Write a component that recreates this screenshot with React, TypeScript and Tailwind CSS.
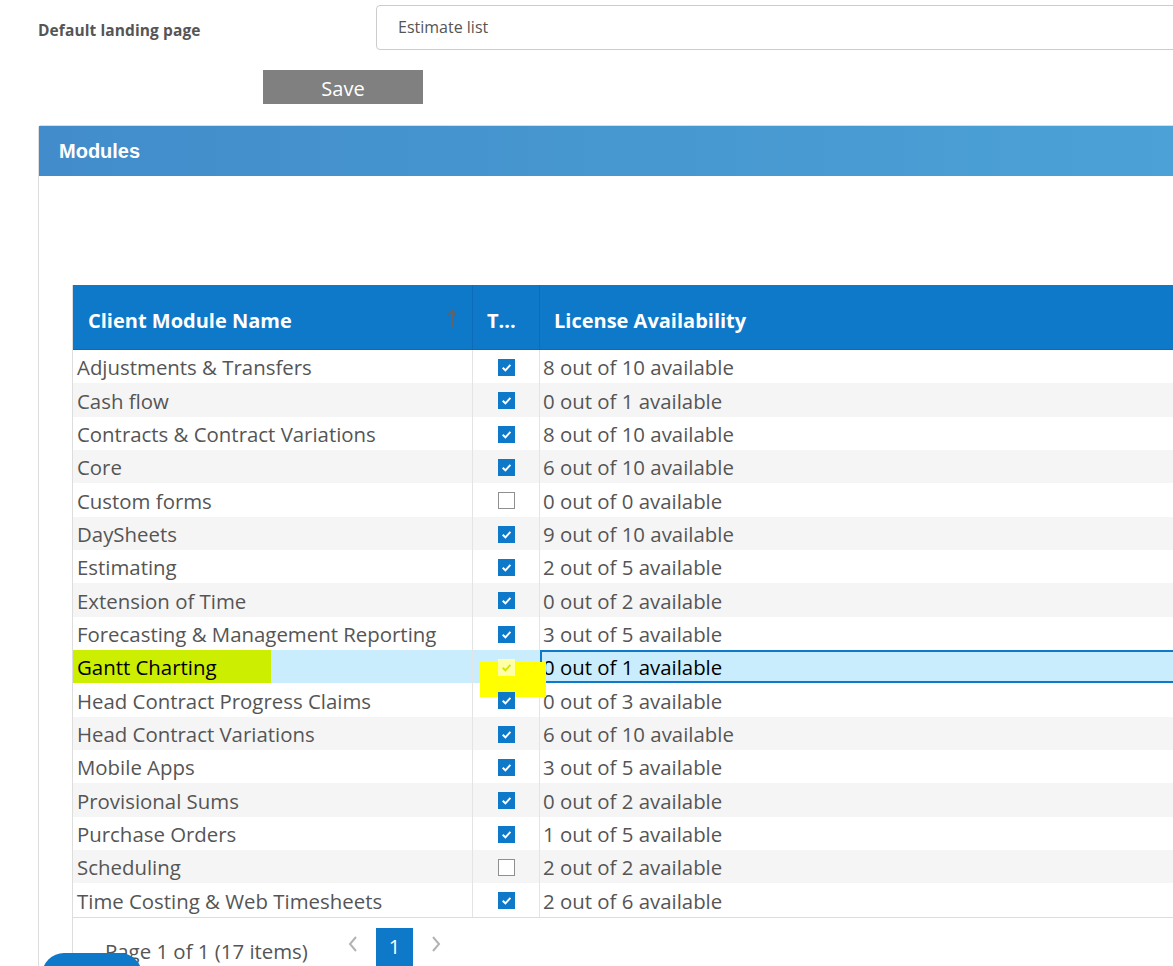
import React from 'react';

const rows: { name: string; on: boolean; lic: string }[] = [
  { name: 'Adjustments & Transfers', on: true, lic: '8 out of 10 available' },
  { name: 'Cash flow', on: true, lic: '0 out of 1 available' },
  { name: 'Contracts & Contract Variations', on: true, lic: '8 out of 10 available' },
  { name: 'Core', on: true, lic: '6 out of 10 available' },
  { name: 'Custom forms', on: false, lic: '0 out of 0 available' },
  { name: 'DaySheets', on: true, lic: '9 out of 10 available' },
  { name: 'Estimating', on: true, lic: '2 out of 5 available' },
  { name: 'Extension of Time', on: true, lic: '0 out of 2 available' },
  { name: 'Forecasting & Management Reporting', on: true, lic: '3 out of 5 available' },
  { name: 'Gantt Charting', on: true, lic: '0 out of 1 available' },
  { name: 'Head Contract Progress Claims', on: true, lic: '0 out of 3 available' },
  { name: 'Head Contract Variations', on: true, lic: '6 out of 10 available' },
  { name: 'Mobile Apps', on: true, lic: '3 out of 5 available' },
  { name: 'Provisional Sums', on: true, lic: '0 out of 2 available' },
  { name: 'Purchase Orders', on: true, lic: '1 out of 5 available' },
  { name: 'Scheduling', on: false, lic: '2 out of 2 available' },
  { name: 'Time Costing & Web Timesheets', on: true, lic: '2 out of 6 available' },
];

const font = { fontFamily: '"Open Sans", "Liberation Sans", sans-serif' };

function Check({ on, faded }: { on: boolean; faded?: boolean }) {
  if (faded) {
    return (
      <div className="w-[17px] h-[17px] bg-[#ffffa8] flex items-center justify-center">
        <svg width="13" height="13" viewBox="0 0 12 12">
          <path d="M2.5 6.2 L5 8.6 L9.6 3.6" fill="none" stroke="#d4e600" strokeWidth="1.8" />
        </svg>
      </div>
    );
  }
  if (!on) {
    return <div className="w-[17px] h-[17px] border border-[#8f8f8f] bg-white" />;
  }
  return (
    <div className="w-[17px] h-[17px] bg-[#0e78c9] flex items-center justify-center">
      <svg width="13" height="13" viewBox="0 0 12 12">
        <path d="M2.5 6.2 L5 8.6 L9.6 3.6" fill="none" stroke="#fff" strokeWidth="1.8" />
      </svg>
    </div>
  );
}

export default function App() {
  return (
    <div className="relative w-[1173px] h-[966px] overflow-hidden bg-white text-[#555]" style={font}>
      {/* landing page row */}
      <div className="flex items-center pt-[5px] w-[1300px]">
        <div className="w-[376px] pl-[38px] pt-[6px] text-[15.5px] font-bold text-[#555] tracking-[0.1px]">Default landing page</div>
        <div className="flex-1 h-[45px] border border-[#ccc] rounded-[4px] flex items-center pl-[21px] pb-[2px] text-[16px] text-[#555]">
          Estimate list
        </div>
      </div>

      <div className="ml-[263px] mt-[20px] w-[160px] h-[34px] bg-[#808080] text-white text-[20px] flex items-center justify-center pt-[3px]">
        Save
      </div>

      {/* modules panel */}
      <div className="ml-[38px] mt-[21px] w-[1200px] h-[900px] border border-[#ddd] rounded-t-[3px]">
        <div
          className="h-[50px] flex items-center pl-[20px] text-white text-[20px] font-bold bg-gradient-to-r from-[#428ccb] to-[#4ca3d6]"
          style={{ fontFamily: '"Liberation Sans", Arial, sans-serif' }}
        >
          Modules
        </div>
        <div className="pt-[109px] pl-[33px]">
          <div className="border-l border-[#ddd] w-[1200px]">
            {/* header */}
            <div className="flex h-[65px] bg-[#0e78c9] text-white text-[20px] font-bold border-b border-[#0b6ab4]">
              <div className="w-[400px] flex items-center pl-[15px] pt-[7px] border-r border-[#0c6cb8] relative">
                Client Module Name
                <svg className="absolute left-[374px] top-[23px]" width="10" height="20" viewBox="0 0 10 20">
                  <path d="M5 19 V3 M1.5 7 L5 2.5 L8.5 7" fill="none" stroke="#5f6468" strokeWidth="2" />
                </svg>
              </div>
              <div className="w-[67px] flex items-center pl-[14px] pt-[7px] border-r border-[#0c6cb8]">T...</div>
              <div className="flex-1 flex items-center pl-[14px] pt-[7px]">License Availability</div>
            </div>
            {/* rows */}
            {rows.map((r, i) => {
              const sel = r.name === 'Gantt Charting';
              const bg = sel ? 'bg-[#c9edfd]' : i % 2 === 1 ? 'bg-[#f5f5f5]' : 'bg-white';
              return (
                <div key={r.name} className={`flex h-[33.33px] text-[20.4px] ${bg}`}>
                  <div className="w-[400px] flex items-center border-r border-[#e4e4e4] relative">
                    {sel && <div className="absolute left-0 top-0 w-[198px] h-full bg-[#ccee00]" />}
                    <span className={`relative pl-[4px] pt-[2px] ${sel ? 'text-black' : ''}`}>{r.name}</span>
                  </div>
                  <div className="w-[67px] flex items-center justify-center pt-[2px] border-r border-[#e4e4e4] relative">
                    {sel && <div className="absolute left-[7px] top-[12px] w-[66px] h-[35px] bg-[#ffff00] z-10" />}
                    <div className="relative z-20">
                      <Check on={r.on} faded={sel} />
                    </div>
                  </div>
                  <div
                    className={`flex-1 flex items-center pt-[2px] ${
                      sel ? 'border-2 border-[#0e78c9] text-black pl-[1px]' : 'pl-[3px]'
                    }`}
                  >
                    {r.lic}
                  </div>
                </div>
              );
            })}
            {/* pager */}
            <div className="border-t border-[#ddd] flex items-start h-[60px]">
              <div className="pl-[32px] pt-[18px] text-[20.4px] text-[#555]">Page 1 of 1 (17 items)</div>
              <div className="ml-[38px] pt-[16px]">
                <svg width="14" height="20" viewBox="0 0 14 20">
                  <path d="M10 3 L4 10 L10 17" fill="none" stroke="#b3b3b3" strokeWidth="2" />
                </svg>
              </div>
              <div className="ml-[16px] mt-[10px] w-[37px] h-[40px] bg-[#0e78c9] text-white text-[20px] flex items-center justify-center pb-[2px]">
                1
              </div>
              <div className="ml-[16px] pt-[16px]">
                <svg width="14" height="20" viewBox="0 0 14 20">
                  <path d="M4 3 L10 10 L4 17" fill="none" stroke="#b3b3b3" strokeWidth="2" />
                </svg>
              </div>
            </div>
          </div>
        </div>
      </div>

      {/* overlay button peeking in at the bottom */}
      <div className="absolute left-[42px] top-[953px] w-[100px] h-[40px] bg-[#0e78c9] rounded-t-[22px]" />
    </div>
  );
}
